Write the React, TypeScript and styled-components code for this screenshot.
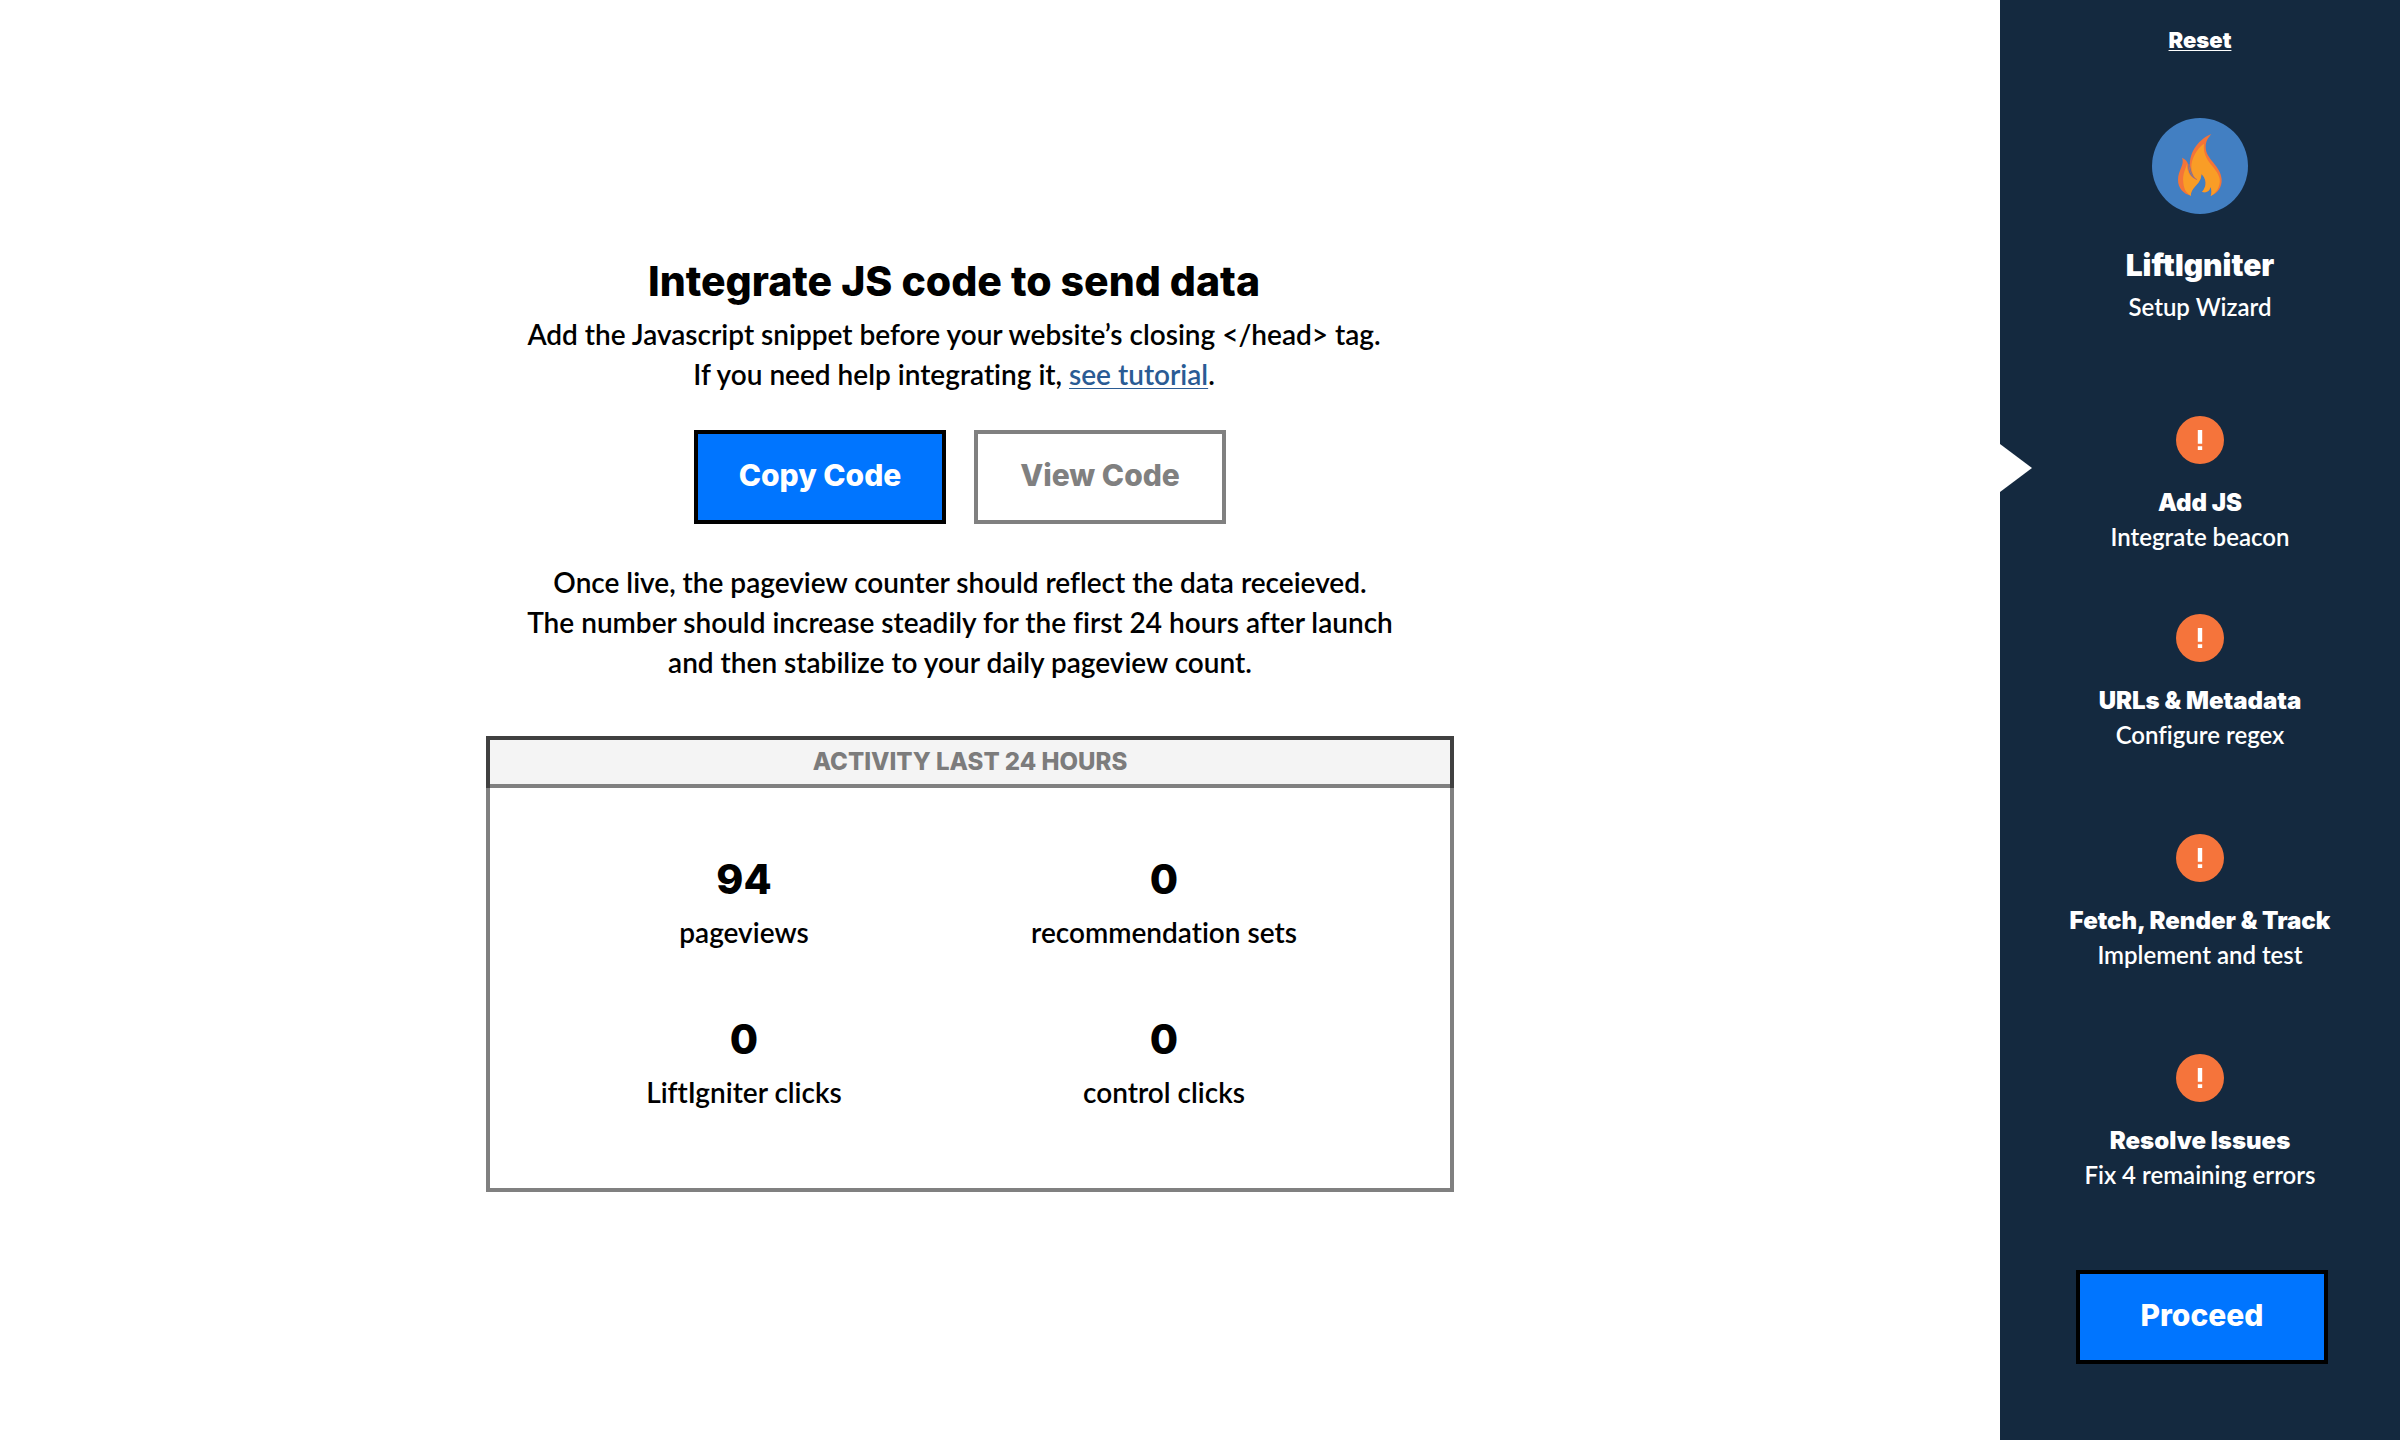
import React from 'react';
import styled, { createGlobalStyle, css } from 'styled-components';

const colors = {
  ink: '#000000',
  navy: '#14293f',
  blue: '#0075ff',
  link: '#2a5b94',
  gray: '#808080',
  charcoal: '#404040',
  mist: '#f4f4f4',
  orange: '#f5743b',
  white: '#ffffff',
};

const bodyFont = 'Lato, "Liberation Sans", sans-serif';
const displayFont = 'Inter, "Liberation Sans", sans-serif';

const GlobalStyle = createGlobalStyle`
  *, *::before, *::after { box-sizing: border-box; }
  body {
    margin: 0;
    background: ${colors.white};
    color: ${colors.ink};
    font-family: ${bodyFont};
    font-weight: 600;
    font-variant-ligatures: no-common-ligatures;
  }
  h1, h2, p, dl, dd, ol { margin: 0; padding: 0; }
`;

const Page = styled.div`
  display: flex;
  min-height: 100vh;
`;

const Main = styled.main`
  flex: 1;
  display: flex;
  justify-content: center;
  align-items: center;
  padding: 16px 60px 16px 0;
`;

const Content = styled.div`
  width: 968px;
  max-width: 100%;
  display: flex;
  flex-direction: column;
`;

const Intro = styled.header`
  padding-right: 32px;
  text-align: center;
`;

const Note = styled.div`
  padding-right: 20px;
  text-align: center;
`;

const Title = styled.h1`
  font-family: ${displayFont};
  font-weight: 800;
  font-size: 41px;
  line-height: 66px;
`;

const Text = styled.p`
  font-size: 28px;
  line-height: 40px;
`;

const TutorialLink = styled.a`
  color: ${colors.link};
  text-decoration-thickness: 1px;
  text-underline-offset: 3px;
`;

const Actions = styled.div`
  display: flex;
  justify-content: center;
  gap: 28px;
  margin: 36px 0 38px;
  padding-right: 20px;
`;

const Button = styled.button<{ $outline?: boolean }>`
  width: 252px;
  height: 94px;
  padding: 0 0 4px;
  border: 4px solid ${colors.ink};
  background: ${colors.blue};
  color: ${colors.white};
  font-family: ${displayFont};
  font-weight: 800;
  font-size: 30px;
  cursor: pointer;
  ${p =>
    p.$outline &&
    css`
      border-color: ${colors.gray};
      background: ${colors.white};
      color: ${colors.gray};
    `}
`;

const Activity = styled.section`
  margin-top: 54px;
`;

const ActivityTitle = styled.h2`
  border: 4px solid ${colors.charcoal};
  border-bottom: 0;
  padding-bottom: 4px;
  background: ${colors.mist};
  box-shadow: inset 0 -4px 0 ${colors.gray};
  color: #7c7c7c;
  font-family: ${displayFont};
  font-weight: 800;
  font-size: 24px;
  line-height: 44px;
  text-align: center;
`;

const Stats = styled.dl`
  display: grid;
  grid-template-columns: 1fr 1fr;
  row-gap: 54px;
  border: 4px solid ${colors.gray};
  border-top: 0;
  padding: 58px 76px 76px 44px;
`;

const Stat = styled.div`
  display: flex;
  flex-direction: column-reverse;
  align-items: center;
`;

const StatLabel = styled.dt`
  font-size: 28px;
  line-height: 40px;
`;

const StatValue = styled.dd`
  font-family: ${displayFont};
  font-weight: 800;
  font-size: 41px;
  line-height: 66px;
`;

const Sidebar = styled.aside`
  width: 400px;
  flex-shrink: 0;
  display: flex;
  flex-direction: column;
  align-items: center;
  padding: 24px 0;
  background: ${colors.navy};
  color: ${colors.white};
  text-align: center;
`;

const ResetLink = styled.a`
  color: ${colors.white};
  font-family: ${displayFont};
  font-weight: 900;
  font-size: 22px;
  line-height: 32px;
  text-decoration-thickness: 1px;
  text-underline-offset: 2px;
`;

const Logo = styled.svg`
  width: 96px;
  height: 96px;
  margin: 62px 0 29px;
`;

const Brand = styled.h2`
  font-family: ${displayFont};
  font-weight: 900;
  font-size: 30px;
  line-height: 44px;
`;

const BrandCaption = styled.p`
  font-size: 24px;
  line-height: 40px;
`;

const Steps = styled.ol`
  width: 100%;
  margin-top: 89px;
  list-style: none;
`;

const Step = styled.li<{ $current?: boolean }>`
  position: relative;
  display: flex;
  flex-direction: column;
  align-items: center;
  min-height: ${p => (p.$current ? 198 : 220)}px;
  &:last-child {
    min-height: 216px;
  }
  ${p =>
    p.$current &&
    css`
      &::before {
        content: '';
        position: absolute;
        left: 0;
        top: 28px;
        border-style: solid;
        border-width: 24px 0 24px 32px;
        border-color: transparent transparent transparent ${colors.white};
      }
    `}
`;

const AlertIcon = styled.svg`
  width: 48px;
  height: 48px;
  margin-bottom: 22px;
`;

const StepTitle = styled.p`
  font-family: ${displayFont};
  font-weight: 900;
  font-size: 24px;
  line-height: 34px;
`;

const StepCaption = styled.p`
  font-size: 24px;
  line-height: 34px;
`;

const SidebarFooter = styled.div`
  padding-left: 4px;
`;

const steps = [
  { title: 'Add JS', caption: 'Integrate beacon' },
  { title: 'URLs & Metadata', caption: 'Configure regex' },
  { title: 'Fetch, Render & Track', caption: 'Implement and test' },
  { title: 'Resolve Issues', caption: 'Fix 4 remaining errors' },
];

const stats = [
  { value: 94, label: 'pageviews' },
  { value: 0, label: 'recommendation sets' },
  { value: 0, label: 'LiftIgniter clicks' },
  { value: 0, label: 'control clicks' },
];

function FlameLogo() {
  return (
    <Logo viewBox="156 84 288 288" aria-hidden="true">
      <circle cx="300" cy="228" r="144" fill="#427fc2" />
      <path
        fill="#f37439"
        d="M334 132 C300 146 268 182 270 226 C271 244 279 260 291 269 C272 260 265 246 265 230 C265 216 257 208 246 203 C255 224 234 240 234 270 C234 294 250 312 273 317 C272 290 304 284 304 252 C320 266 322 288 306 306 C318 308 330 304 331 290 C336 300 335 310 332 318 C354 310 366 292 365 268 C363 226 316 208 317 170 C317 154 324 144 334 132 Z"
      />
      <path
        fill="#f99d26"
        d="M312 161 C290 176 274 206 274 232 C275 248 281 262 291 270 C272 264 262 248 260 222 C257 240 247 250 250 278 C252 300 262 312 273 317 C272 290 304 284 304 252 C320 266 322 288 306 306 C318 308 330 304 331 290 C336 300 335 310 332 318 C350 308 362 288 359 266 C352 230 306 214 312 161 Z"
      />
      <path
        fill="none"
        stroke="#c9705a"
        strokeWidth="3"
        d="M267 222 C267 244 276 260 291 269"
      />
    </Logo>
  );
}

function Alert() {
  return (
    <AlertIcon viewBox="0 0 48 48" aria-hidden="true">
      <circle cx="24" cy="24" r="24" fill={colors.orange} />
      <path fill={colors.white} d="M21.8 14h4.4v13.7h-4.4zM21.8 30.2h4.4V34h-4.4z" />
    </AlertIcon>
  );
}

export default function App() {
  return (
    <Page>
      <GlobalStyle />
      <Main>
        <Content>
          <Intro>
            <Title>Integrate JS code to send data</Title>
            <Text>
              Add the Javascript snippet before your website’s closing &lt;/head&gt; tag.
              <br />
              If you need help integrating it, <TutorialLink href="#tutorial">see tutorial</TutorialLink>.
            </Text>
          </Intro>
          <Actions>
            <Button type="button">Copy Code</Button>
            <Button type="button" $outline>
              View Code
            </Button>
          </Actions>
          <Note>
            <Text>
              Once live, the pageview counter should reflect the data receieved.
              <br />
              The number should increase steadily for the first 24 hours after launch
              <br />
              and then stabilize to your daily pageview count.
            </Text>
          </Note>
          <Activity>
            <ActivityTitle>ACTIVITY LAST 24 HOURS</ActivityTitle>
            <Stats>
              {stats.map(s => (
                <Stat key={s.label}>
                  <StatLabel>{s.label}</StatLabel>
                  <StatValue>{s.value}</StatValue>
                </Stat>
              ))}
            </Stats>
          </Activity>
        </Content>
      </Main>
      <Sidebar>
        <ResetLink href="#reset">Reset</ResetLink>
        <FlameLogo />
        <Brand>LiftIgniter</Brand>
        <BrandCaption>Setup Wizard</BrandCaption>
        <Steps>
          {steps.map((s, i) => (
            <Step key={s.title} $current={i === 0}>
              <Alert />
              <StepTitle>{s.title}</StepTitle>
              <StepCaption>{s.caption}</StepCaption>
            </Step>
          ))}
        </Steps>
        <SidebarFooter>
          <Button type="button">Proceed</Button>
        </SidebarFooter>
      </Sidebar>
    </Page>
  );
}
